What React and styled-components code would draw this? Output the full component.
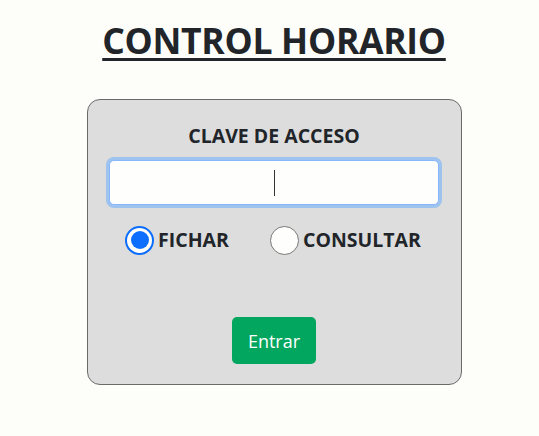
import React, { useState } from "react";
import styled, { createGlobalStyle } from "styled-components";

const Global = createGlobalStyle`
  html, body { margin: 0; padding: 0; background: #fdfdf9; }
  body { font-family: "Open Sans", "Noto Sans", sans-serif; color: #212529; }
`;

const Page = styled.main`
  display: flex;
  flex-direction: column;
  align-items: center;
  padding: 16px 0 0 9px;
`;

const Title = styled.h1`
  margin: 0;
  font-size: 35.5px;
  font-weight: 700;
  text-decoration: underline;
  text-decoration-thickness: 3px;
  text-underline-offset: 4px;
  letter-spacing: -0.3px;
  color: #212529;
`;

const Card = styled.form`
  margin-top: 35px;
  width: 373px;
  height: 284px;
  box-sizing: content-box;
  background: #dddddd;
  border: 1px solid #6a6a6a;
  border-radius: 13px;
  display: flex;
  flex-direction: column;
  align-items: center;
  padding: 0;
`;

const Label = styled.label`
  margin-top: 23px;
  font-size: 19.5px;
  font-weight: 700;
  line-height: 26px;
`;

const InputWrap = styled.div`
  position: relative;
  margin-top: 11px;
  width: 330px;
  height: 45px;
`;

const Input = styled.input`
  box-sizing: border-box;
  width: 100%;
  height: 100%;
  border: 1px solid #86b7fe;
  border-radius: 5px;
  background: #fefefc;
  box-shadow: 0 0 0 3px #9dc3ee;
  outline: none;
  text-align: center;
  font-size: 18px;
  font-family: inherit;
  caret-color: transparent;
`;

const Caret = styled.span`
  position: absolute;
  left: 50%;
  top: 10px;
  width: 1px;
  height: 26px;
  background: #333;
  pointer-events: none;
`;

const Options = styled.div`
  display: flex;
  gap: 41px;
  margin-top: 20px;
  margin-left: -2px;
`;

const Option = styled.label`
  display: flex;
  align-items: center;
  gap: 4px;
  font-size: 19.5px;
  font-weight: 700;
  line-height: 30px;
  cursor: pointer;
`;

const RadioCircle = styled.span`
  box-sizing: border-box;
  width: 29px;
  height: 29px;
  border-radius: 50%;
  border: ${(p) => (p.$on ? "2px solid #0d6efd" : "1px solid #777")};
  background: #fefefc;
  display: flex;
  align-items: center;
  justify-content: center;
  &::after {
    content: "";
    display: ${(p) => (p.$on ? "block" : "none")};
    width: 18px;
    height: 18px;
    border-radius: 50%;
    background: #0d6efd;
  }
`;

const HiddenRadio = styled.input`
  display: none;
`;

const Button = styled.button`
  margin-top: 62px;
  width: 84px;
  height: 47px;
  border: none;
  border-radius: 5px;
  background: #03a65e;
  color: #fff;
  font-family: inherit;
  font-size: 18px;
  cursor: pointer;
`;

export default function App() {
  const [mode, setMode] = useState("fichar");
  return (
    <>
      <Global />
      <Page>
        <Title>CONTROL HORARIO</Title>
        <Card onSubmit={(e) => e.preventDefault()}>
          <Label htmlFor="clave">CLAVE DE ACCESO</Label>
          <InputWrap>
            <Input id="clave" type="password" />
            <Caret />
          </InputWrap>
          <Options>
            <Option>
              <HiddenRadio type="radio" name="modo" checked={mode === "fichar"} onChange={() => setMode("fichar")} />
              <RadioCircle $on={mode === "fichar"} />
              FICHAR
            </Option>
            <Option>
              <HiddenRadio type="radio" name="modo" checked={mode === "consultar"} onChange={() => setMode("consultar")} />
              <RadioCircle $on={mode === "consultar"} />
              CONSULTAR
            </Option>
          </Options>
          <Button type="submit">Entrar</Button>
        </Card>
      </Page>
    </>
  );
}
